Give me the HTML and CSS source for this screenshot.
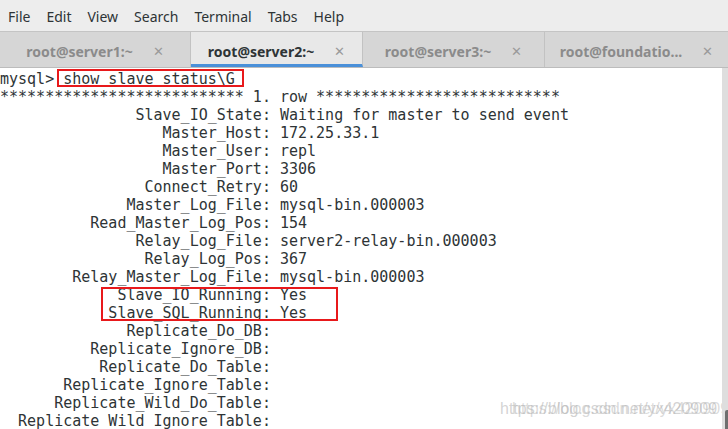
FILE: index.html
```html
<!DOCTYPE html>
<html lang="en">
<head>
    <meta charset="UTF-8">
    <title>root@server2:~</title>
    <link rel="stylesheet" href="styles.css">
</head>
<body>
    <div class="window">
        <div class="menubar">
            <span>File</span>
            <span>Edit</span>
            <span>View</span>
            <span>Search</span>
            <span>Terminal</span>
            <span>Tabs</span>
            <span>Help</span>
        </div>
        <div class="tabs">
            <div class="tab tab-1"><span class="title">root@server1:~</span><span class="close">&#x2715;</span></div>
            <div class="tab tab-2 active"><span class="title">root@server2:~</span><span class="close">&#x2715;</span></div>
            <div class="tab tab-3"><span class="title">root@server3:~</span><span class="close">&#x2715;</span></div>
            <div class="tab tab-4"><span class="title">root@foundatio...</span><span class="close">&#x2715;</span></div>
        </div>
        <div class="body">
            <div class="term">
                <div class="line">mysql&gt; <span class="mark">show slave status\G</span></div>
                <div class="line">*************************** 1. row ***************************</div>
                <div class="line">               Slave_IO_State: Waiting for master to send event</div>
                <div class="line">                  Master_Host: 172.25.33.1</div>
                <div class="line">                  Master_User: repl</div>
                <div class="line">                  Master_Port: 3306</div>
                <div class="line">                Connect_Retry: 60</div>
                <div class="line">              Master_Log_File: mysql-bin.000003</div>
                <div class="line">          Read_Master_Log_Pos: 154</div>
                <div class="line">               Relay_Log_File: server2-relay-bin.000003</div>
                <div class="line">                Relay_Log_Pos: 367</div>
                <div class="line">        Relay_Master_Log_File: mysql-bin.000003</div>
                <div class="boxed">
                    <div class="line">             Slave_IO_Running: Yes</div>
                    <div class="line">            Slave_SQL_Running: Yes</div>
                </div>
                <div class="line">              Replicate_Do_DB: </div>
                <div class="line">          Replicate_Ignore_DB: </div>
                <div class="line">           Replicate_Do_Table: </div>
                <div class="line">       Replicate_Ignore_Table: </div>
                <div class="line">      Replicate_Wild_Do_Table: </div>
                <div class="line">  Replicate_Wild_Ignore_Table: </div>
                <div class="watermark">https://blog.csdn.net/yx420909</div>
            </div>
            <div class="scrollbar"><div class="thumb"></div></div>
        </div>
    </div>
</body>
</html>
```

FILE: styles.css
```css
* {
    box-sizing: border-box;
    margin: 0;
    padding: 0;
}
html, body {
    width: 728px;
    height: 429px;
    overflow: hidden;
    background: #ffffff;
}
.window {
    display: flex;
    flex-direction: column;
    height: 429px;
}

/* menu */
.menubar {
    display: flex;
    align-items: center;
    height: 31px;
    padding-left: 8px;
    padding-top: 2px;
    background-color: #ededed;
    font-family: "Noto Sans", sans-serif;
    font-size: 14px;
    color: #2e3436;
}
.menubar span {
    margin-right: 16px;
}

/* tabs */
.tabs {
    display: flex;
    height: 37px;
    background-color: #d6d6d6;
    border-top: 1px solid #c4c4c4;
    border-bottom: 1px solid #bcbcbc;
    font-family: "Noto Sans", sans-serif;
    font-weight: bold;
    font-size: 14px;
    color: #8b8b8b;
}
.tab {
    display: flex;
    align-items: center;
    justify-content: center;
    gap: 20px;
    padding-top: 3px;
    border-right: 1px solid #c2c2c2;
}
.tab-1 { width: 191px; }
.tab-2 { width: 172px; }
.tab-3 { width: 182px; }
.tab-4 { width: 177px; border-right: none; padding-left: 6px; }
.tab.active {
    background-color: #e8e8e8;
    color: #2e3436;
    border-bottom: 3px solid #4a90d9;
    padding-top: 6px;
}
.close {
    font-size: 13px;
    font-weight: normal;
    color: #9a9a9a;
}

/* terminal */
.body {
    display: flex;
    flex: 1;
    min-height: 0;
}
.term {
    position: relative;
    flex: 1;
    padding-top: 2px;
    font-family: "DejaVu Sans Mono", monospace;
    font-size: 15px;
    line-height: 18px;
    color: #2e3436;
    overflow: hidden;
}
.line {
    white-space: pre;
    height: 18px;
}
.mark {
    position: relative;
}
.mark::after {
    content: "";
    position: absolute;
    left: -6px;
    right: -9px;
    top: -1px;
    bottom: 1px;
    border: 2px solid #e8191b;
}
.boxed {
    position: relative;
}
.boxed::after {
    content: "";
    position: absolute;
    left: 101px;
    width: 233px;
    top: 1px;
    bottom: 1px;
    border: 2px solid #e8191b;
}
.watermark {
    position: absolute;
    left: 500px;
    top: 332px;
    font-family: "Liberation Sans", sans-serif;
    font-size: 16px;
    white-space: nowrap;
    color: rgba(175, 175, 175, 0.55);
    text-shadow: 12px 0 0 rgba(175, 175, 175, 0.45);
}
.scrollbar {
    display: flex;
    flex-direction: column;
    justify-content: flex-end;
    width: 6px;
    background-color: #dedede;
}
.thumb {
    height: 19px;
    margin-left: 3px;
    border-radius: 2px 0 0 0;
    background-color: #6f6f6f;
}
```
